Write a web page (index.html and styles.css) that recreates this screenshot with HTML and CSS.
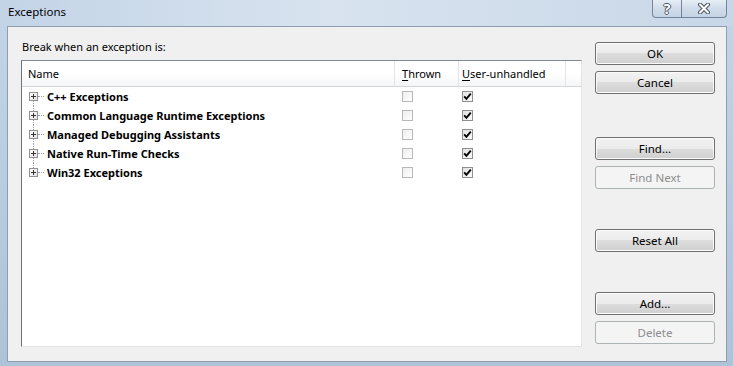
FILE: index.html
```html
<!DOCTYPE html>
<html lang="en">
<head>
    <meta charset="UTF-8">
    <title>Exceptions</title>
    <link rel="stylesheet" href="styles.css">
</head>
<body>

    <div class="window">
        <div class="titlebar">
            <span class="title">Exceptions</span>
            <div class="caption-btns">
                <div class="cap-btn help">?</div>
                <div class="cap-btn close">
                    <svg width="14" height="11" viewBox="0 0 14 11">
                        <path d="M3 1.5 L11 9.5 M11 1.5 L3 9.5" stroke="#4b5563" stroke-width="4" stroke-linecap="round"/>
                        <path d="M3 1.5 L11 9.5 M11 1.5 L3 9.5" stroke="#fff" stroke-width="2" stroke-linecap="round"/>
                    </svg>
                </div>
            </div>
        </div>

        <div class="client">
            <div class="main">
                <div class="prompt">Break when an exception is:</div>

                <div class="list">
                    <div class="list-head">
                        <div class="col col-name">Name</div>
                        <div class="col col-thrown"><u>T</u>hrown</div>
                        <div class="col col-user"><u>U</u>ser-unhandled</div>
                        <div class="col col-fill"></div>
                    </div>

                    <div class="tree">
                        <div class="row first">
                            <div class="cell-name">
                                <span class="branch"><span class="expander"></span></span>
                                <span class="connector"></span>
                                <span class="label">C++ Exceptions</span>
                            </div>
                            <div class="cell-thrown"><span class="check"></span></div>
                            <div class="cell-user"><span class="check on"><svg width="9" height="9" viewBox="0 0 9 9"><path d="M1.2 4.3 L3.4 6.8 L7.8 1.6" fill="none" stroke="#000" stroke-width="1.9"/></svg></span></div>
                        </div>
                        <div class="row">
                            <div class="cell-name">
                                <span class="branch"><span class="expander"></span></span>
                                <span class="connector"></span>
                                <span class="label">Common Language Runtime Exceptions</span>
                            </div>
                            <div class="cell-thrown"><span class="check"></span></div>
                            <div class="cell-user"><span class="check on"><svg width="9" height="9" viewBox="0 0 9 9"><path d="M1.2 4.3 L3.4 6.8 L7.8 1.6" fill="none" stroke="#000" stroke-width="1.9"/></svg></span></div>
                        </div>
                        <div class="row">
                            <div class="cell-name">
                                <span class="branch"><span class="expander"></span></span>
                                <span class="connector"></span>
                                <span class="label">Managed Debugging Assistants</span>
                            </div>
                            <div class="cell-thrown"><span class="check"></span></div>
                            <div class="cell-user"><span class="check on"><svg width="9" height="9" viewBox="0 0 9 9"><path d="M1.2 4.3 L3.4 6.8 L7.8 1.6" fill="none" stroke="#000" stroke-width="1.9"/></svg></span></div>
                        </div>
                        <div class="row">
                            <div class="cell-name">
                                <span class="branch"><span class="expander"></span></span>
                                <span class="connector"></span>
                                <span class="label">Native Run-Time Checks</span>
                            </div>
                            <div class="cell-thrown"><span class="check"></span></div>
                            <div class="cell-user"><span class="check on"><svg width="9" height="9" viewBox="0 0 9 9"><path d="M1.2 4.3 L3.4 6.8 L7.8 1.6" fill="none" stroke="#000" stroke-width="1.9"/></svg></span></div>
                        </div>
                        <div class="row last">
                            <div class="cell-name">
                                <span class="branch"><span class="expander"></span></span>
                                <span class="connector"></span>
                                <span class="label">Win32 Exceptions</span>
                            </div>
                            <div class="cell-thrown"><span class="check"></span></div>
                            <div class="cell-user"><span class="check on"><svg width="9" height="9" viewBox="0 0 9 9"><path d="M1.2 4.3 L3.4 6.8 L7.8 1.6" fill="none" stroke="#000" stroke-width="1.9"/></svg></span></div>
                        </div>
                    </div>
                </div>
            </div>

            <div class="buttons">
                <button class="btn">OK</button>
                <button class="btn near">Cancel</button>
                <button class="btn far first-far">Find...</button>
                <button class="btn near" disabled>Find Next</button>
                <button class="btn far">Reset All</button>
                <button class="btn far">Add...</button>
                <button class="btn near" disabled>Delete</button>
            </div>
        </div>
    </div>

</body>
</html>
```

FILE: styles.css
```css
/* Base */
* {
    margin: 0;
    padding: 0;
    box-sizing: border-box;
}

body {
    width: 733px;
    height: 366px;
    overflow: hidden;
    font-family: "Noto Sans", "DejaVu Sans", sans-serif;
    font-size: 11px;
    color: #000;
    background: linear-gradient(#c4d5e8, #aec2d8);
}

.window {
    display: flex;
    flex-direction: column;
    height: 366px;
}

/* Title bar */
.titlebar {
    height: 26px;
    display: flex;
    justify-content: space-between;
    align-items: flex-start;
    background: linear-gradient(90deg, #c3d4e7, #d8e3ef 45%, #c8d7e8);
}

.title {
    padding: 3px 0 0 8px;
    line-height: 17px;
    font-size: 11.5px;
}

.caption-btns {
    display: flex;
    margin-right: 6px;
}

.cap-btn {
    height: 18px;
    display: flex;
    align-items: center;
    justify-content: center;
    border: 1px solid #74849a;
    border-top: none;
    background: linear-gradient(#e6edf5, #d0dcea 50%, #c4d3e4);
}

.help {
    width: 30px;
    border-bottom-left-radius: 4px;
    font-size: 14px;
    font-weight: bold;
    color: #fff;
    text-shadow: 1px 0 #4b5563, -1px 0 #4b5563, 0 1px #4b5563, 0 -1px #4b5563;
    line-height: 16px;
}

.close {
    width: 45px;
    border-left: none;
    border-bottom-right-radius: 4px;
}

/* Client area */
.client {
    flex: 1;
    display: flex;
    margin: 0 6px 4px 7px;
    border: 1px solid #8f9db0;
    background-color: #f0f0f0;
}

.main {
    padding: 12px 0 0 13px;
}

.prompt {
    line-height: 16px;
    padding-left: 1px;
    margin-bottom: 5px;
}

.list {
    width: 561px;
    height: 287px;
    background-color: #fff;
    border: 1px solid;
    border-color: #828790 #e3e3e3 #e3e3e3 #6f747c;
}

.list-head {
    display: flex;
    height: 26px;
    background: linear-gradient(#ffffff, #ffffff 50%, #f4f5f6);
    border-bottom: 1px solid #d5d5d5;
}

.col {
    line-height: 26px;
    border-right: 1px solid #e5e5e5;
    white-space: nowrap;
}

.col u {
    text-decoration-thickness: 1px;
    text-underline-offset: 2px;
}

.col-name {
    width: 373px;
    padding-left: 6px;
}

.col-thrown {
    width: 64px;
    padding-left: 7px;
}

.col-user {
    width: 107px;
    padding-left: 3px;
}

.col-fill {
    flex: 1;
    border-right: none;
}

/* Tree rows */
.row {
    display: flex;
    height: 19px;
    align-items: center;
}

.cell-name {
    width: 373px;
    display: flex;
    align-items: center;
    height: 19px;
    padding-left: 7px;
}

.branch {
    position: relative;
    width: 9px;
    height: 19px;
    display: flex;
    align-items: center;
}

.branch::before {
    content: "";
    position: absolute;
    left: 4px;
    top: 0;
    bottom: 0;
    border-left: 1px dotted #a0a0a0;
}

.row.first .branch::before {
    top: 10px;
}

.row.last .branch::before {
    bottom: 10px;
}

.expander {
    position: relative;
    width: 9px;
    height: 9px;
    border: 1px solid #919191;
    background: linear-gradient(135deg, #ffffff, #e2e2e2);
}

.expander::before,
.expander::after {
    content: "";
    position: absolute;
    background-color: #333;
}

.expander::before {
    left: 1px;
    top: 3px;
    width: 5px;
    height: 1px;
}

.expander::after {
    left: 3px;
    top: 1px;
    width: 1px;
    height: 5px;
}

.connector {
    width: 6px;
    margin-right: 3px;
    border-top: 1px dotted #a0a0a0;
}

.label {
    font-weight: bold;
    white-space: nowrap;
}

.cell-thrown {
    width: 64px;
    padding-left: 7px;
    display: flex;
}

.cell-user {
    width: 107px;
    padding-left: 3px;
    display: flex;
}

.check {
    width: 11px;
    height: 11px;
    display: flex;
    align-items: center;
    justify-content: center;
    border: 1px solid #b8b8b8;
    background: linear-gradient(135deg, #eeeeee, #ffffff);
}

.check.on {
    border-color: #8e8f8f;
    background: linear-gradient(135deg, #e0e0e0, #fafafa);
}

/* Buttons */
.buttons {
    display: flex;
    flex-direction: column;
    width: 120px;
    margin-left: 13px;
    padding-top: 15px;
}

.btn {
    height: 23px;
    font-family: inherit;
    font-size: 11.5px;
    color: #000;
    border: 1px solid #707070;
    border-radius: 3px;
    background: linear-gradient(#f2f2f2, #ebebeb 50%, #dddddd 50%, #cfcfcf);
    box-shadow: inset 0 0 0 1px #fbfbfb;
}

.btn:disabled {
    color: #8d8d8d;
    border-color: #adb2b5;
    background: #f4f4f4;
    box-shadow: none;
}

.btn.near {
    margin-top: 6px;
}

.btn.far {
    margin-top: 40px;
}

.btn.first-far {
    margin-top: 43px;
}
```
